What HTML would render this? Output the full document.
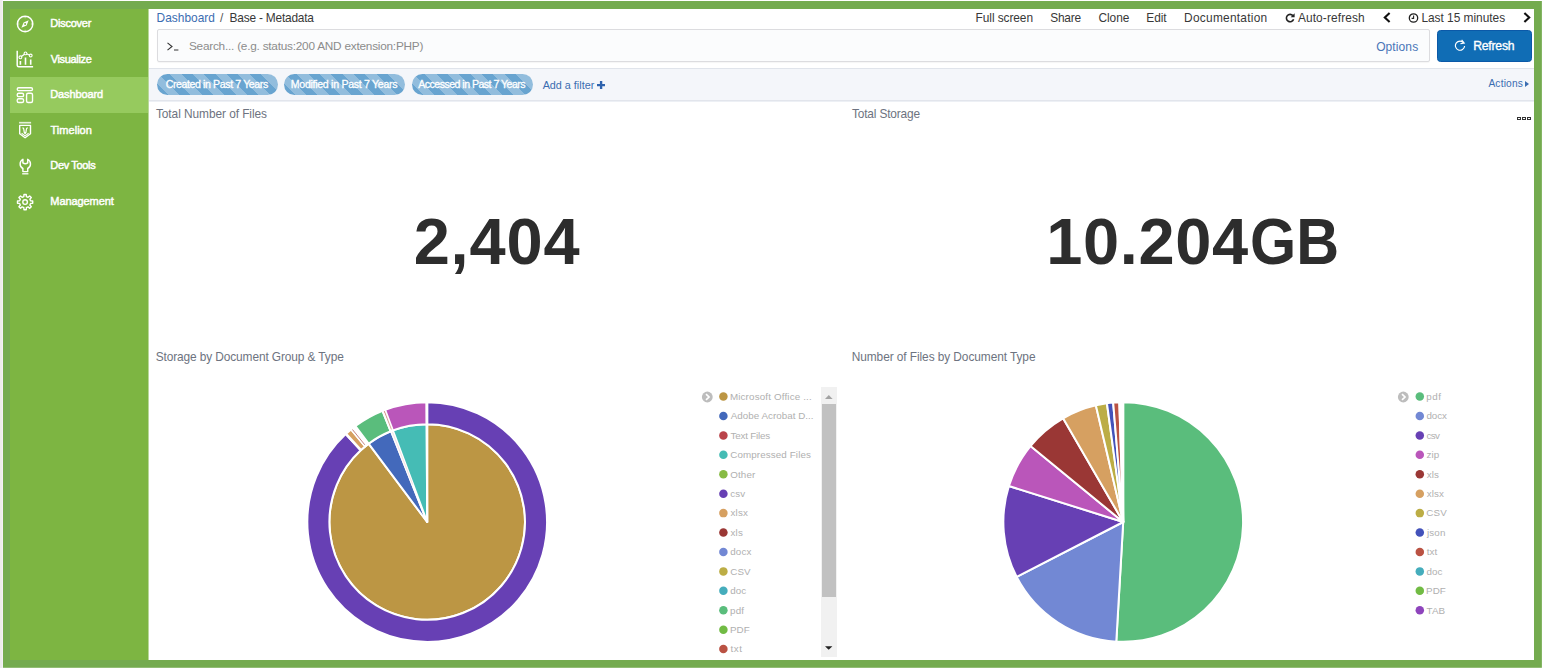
<!DOCTYPE html>
<html lang="en"><head><meta charset="utf-8"><title>Base - Metadata - Kibana</title>
<style>

*{box-sizing:border-box;margin:0;padding:0}
html,body{width:1542px;height:668px;overflow:hidden;background:#fff}
body{font-family:"Liberation Sans",sans-serif;font-size:12px;color:#2d2d2d;position:relative}
#lstrip{position:absolute;left:0;top:0;width:3px;height:668px;background:linear-gradient(90deg,#ececec 0,#ececec 1.8px,#f3f0f6 1.8px)}
#frame{position:absolute;left:3px;top:1px;width:1539px;height:667px;background:#74ab4f}
#side{position:absolute;left:7px;top:8px;width:138px;height:651px;background:#7db542}
#main{position:absolute;left:145px;top:8px;width:1386px;height:651px;background:#fff;overflow:hidden}
.abs{position:absolute;white-space:nowrap}
.pill{position:absolute;top:64.8px;height:21.1px;border-radius:11px;
 background-color:#68a4d0;background-image:repeating-linear-gradient(45deg,rgba(255,255,255,0) 0,rgba(255,255,255,0) 8px,rgba(255,255,255,.28) 8px,rgba(255,255,255,.28) 16px)}

</style></head>
<body>
<div id="lstrip"></div>
<div id="frame">
<div id="side"><div class="abs" style="left:0;top:68px;width:138px;height:36px;background:#96ca5e"></div><svg class="abs" style="left:5.8px;top:5.5px;overflow:visible" width="18" height="18" viewBox="0 0 18 18"><circle cx="9.1" cy="9" r="7.7" fill="none" stroke="#fff" stroke-width="1.5"/><path d="M12.7 5.3 L10.6 10.5 L5.4 12.7 L7.6 7.5 Z" fill="#fff"/><circle cx="9.1" cy="9" r="1" fill="#7db542"/><path d="M9.1 2.2 V3.2 M9.1 14.8 V15.8 M2.3 9 H3.3 M14.9 9 H15.9" stroke="#fff" stroke-width="1" opacity=".8"/></svg><div class="abs" style="left:40.30px;top:7px;font-size:11px;line-height:14px;letter-spacing:-0.243px;color:#fff;-webkit-text-stroke:0.45px #fff;">Discover</div><svg class="abs" style="left:5.8px;top:41.1px;overflow:visible" width="18" height="18" viewBox="0 0 18 18"><path d="M1.2 0.8 V15.2 Q1.2 16.7 2.7 16.7 H17.1" fill="none" stroke="#fff" stroke-width="1.5"/><path d="M4.4 7.3 L9.5 3.4 L14.7 5.5" fill="none" stroke="#fff" stroke-width="1.3"/><circle cx="4.4" cy="7.3" r="1.4" fill="#7db542" stroke="#fff" stroke-width="1.1"/><circle cx="9.5" cy="3.4" r="1.4" fill="#7db542" stroke="#fff" stroke-width="1.1"/><circle cx="14.7" cy="5.5" r="1.4" fill="#7db542" stroke="#fff" stroke-width="1.1"/><path d="M4.4 10.9 V14.8 M9.5 7.4 V14.8 M14.7 9.6 V14.8" stroke="#fff" stroke-width="1.6"/></svg><div class="abs" style="left:40.65px;top:43px;font-size:11px;line-height:14px;letter-spacing:-0.323px;color:#fff;-webkit-text-stroke:0.45px #fff;">Visualize</div><svg class="abs" style="left:5.8px;top:76.7px;overflow:visible" width="18" height="18" viewBox="0 0 18 18"><g fill="none" stroke="#fff" stroke-width="1.35"><rect x="1.22" y="1.78" width="15.3" height="2.85" rx="1.4"/><rect x="1.22" y="7.28" width="6.36" height="3.35" rx="1.5"/><rect x="1.22" y="12.78" width="6.36" height="3.75" rx="1.5"/><rect x="10.58" y="7.28" width="5.95" height="9.25" rx="1.5"/></g></svg><div class="abs" style="left:40.30px;top:78px;font-size:11px;line-height:14px;letter-spacing:-0.125px;color:#fff;-webkit-text-stroke:0.45px #fff;">Dashboard</div><svg class="abs" style="left:5.8px;top:112.3px;overflow:visible" width="18" height="18" viewBox="0 0 18 18"><path d="M3.1 1.7 H15.1" stroke="#fff" stroke-width="1.7" opacity=".8"/><path d="M3.7 4.4 H14.5 V12.8 L9.1 16.8 L3.7 12.8 Z" fill="none" stroke="#fff" stroke-width="1.4" stroke-linejoin="round"/><path d="M6.6 6.6 Q8 7.2 8 9.4 Q8 11.4 9.1 12.5 Q10.2 11.4 10.2 9.4 Q10.2 7.2 11.6 6.6" fill="none" stroke="#fff" stroke-width="1.25"/><path d="M5.6 12.3 L9.1 14.9 L12.6 12.3" fill="none" stroke="#fff" stroke-width="1.1"/></svg><div class="abs" style="left:40.45px;top:114px;font-size:11px;line-height:14px;letter-spacing:0.042px;color:#fff;-webkit-text-stroke:0.45px #fff;">Timelion</div><svg class="abs" style="left:5.8px;top:147.9px;overflow:visible" width="18" height="18" viewBox="0 0 18 18"><path d="M6.9 2.3 A5.2 5.2 0 0 0 6.9 11.5 V14.6 H11.7 V11.5 A5.2 5.2 0 0 0 11.7 2.3 V5.9 Q9.3 7.5 6.9 5.9 Z" fill="none" stroke="#fff" stroke-width="1.45" stroke-linejoin="round"/><path d="M6.2 16.8 H12.4" stroke="#fff" stroke-width="1.3"/></svg><div class="abs" style="left:40.30px;top:149px;font-size:11px;line-height:14px;letter-spacing:-0.340px;color:#fff;-webkit-text-stroke:0.45px #fff;">Dev Tools</div><svg class="abs" style="left:5.8px;top:183.5px;overflow:visible" width="18" height="18" viewBox="0 0 18 18"><g fill="none" stroke="#fff" stroke-width="1.4" stroke-linejoin="round"><path d="M7.79 3.65 L7.96 1.49 L10.24 1.49 L10.41 3.65 L12.03 4.33 L13.67 2.91 L15.29 4.53 L13.87 6.17 L14.55 7.79 L16.71 7.96 L16.71 10.24 L14.55 10.41 L13.87 12.03 L15.29 13.67 L13.67 15.29 L12.03 13.87 L10.41 14.55 L10.24 16.71 L7.96 16.71 L7.79 14.55 L6.17 13.87 L4.53 15.29 L2.91 13.67 L4.33 12.03 L3.65 10.41 L1.49 10.24 L1.49 7.96 L3.65 7.79 L4.33 6.17 L2.91 4.53 L4.53 2.91 L6.17 4.33 Z"/><circle cx="9.1" cy="9.1" r="2.3"/></g></svg><div class="abs" style="left:40.30px;top:185px;font-size:11px;line-height:14px;letter-spacing:-0.080px;color:#fff;-webkit-text-stroke:0.45px #fff;">Management</div></div>
<div id="main">
<div class="abs" style="left:8.62px;top:2px;font-size:11.9px;line-height:15px;letter-spacing:0.016px;color:#3b6db1;">Dashboard</div><div class="abs" style="left:72.00px;top:2px;font-size:11.9px;line-height:15px;letter-spacing:0.000px;color:#555;">/</div><div class="abs" style="left:81.52px;top:2px;font-size:11.9px;line-height:15px;letter-spacing:-0.203px;color:#383838;">Base - Metadata</div><div class="abs" style="left:827.62px;top:2px;font-size:11.9px;line-height:15px;letter-spacing:-0.075px;color:#383838;">Full screen</div><div class="abs" style="left:902.26px;top:2px;font-size:11.9px;line-height:15px;letter-spacing:-0.221px;color:#383838;">Share</div><div class="abs" style="left:950.50px;top:2px;font-size:11.9px;line-height:15px;letter-spacing:-0.065px;color:#383838;">Clone</div><div class="abs" style="left:998.32px;top:2px;font-size:11.9px;line-height:15px;letter-spacing:-0.114px;color:#383838;">Edit</div><div class="abs" style="left:1036.12px;top:2px;font-size:11.9px;line-height:15px;letter-spacing:0.259px;color:#383838;">Documentation</div><div class="abs" style="left:1149.88px;top:2px;font-size:11.9px;line-height:15px;letter-spacing:0.129px;color:#383838;">Auto-refresh</div><div class="abs" style="left:1273.42px;top:2px;font-size:11.9px;line-height:15px;letter-spacing:-0.014px;color:#383838;">Last 15 minutes</div>
<svg class="abs" style="left:1136.5px;top:4.3px" width="10" height="10" viewBox="0 0 10 10"><path d="M7.9 2.6 A3.7 3.7 0 1 0 8.6 6.3" fill="none" stroke="#222" stroke-width="1.6"/><path d="M9.6 0.3 V4.3 H5.6 Z" fill="#222"/></svg>
<svg class="abs" style="left:1234px;top:3.2px" width="10" height="11" viewBox="0 0 10 11"><path d="M7.6 1 L2.8 5.5 L7.6 10" fill="none" stroke="#111" stroke-width="2.1"/></svg>
<svg class="abs" style="left:1259.5px;top:4.3px" width="11" height="10" viewBox="0 0 11 10"><circle cx="5.5" cy="5" r="4.2" fill="none" stroke="#222" stroke-width="1.3"/><path d="M5.6 2.6 V5.4 H3.6" fill="none" stroke="#222" stroke-width="1.1"/></svg>
<svg class="abs" style="left:1373.5px;top:3.2px" width="10" height="11" viewBox="0 0 10 11"><path d="M2.4 1 L7.2 5.5 L2.4 10" fill="none" stroke="#111" stroke-width="2.1"/></svg>

<div class="abs" style="left:8.5px;top:20px;width:1273.3px;height:33px;background:#fbfcfd;border:1px solid #dcdcdf;border-radius:2px;box-shadow:0 1px 1px rgba(0,0,0,.04)"></div>
<svg class="abs" style="left:19px;top:33px" width="12" height="9" viewBox="0 0 12 9"><path d="M0.5 0.8 L5 4.5 L0.5 8.2" fill="none" stroke="#333" stroke-width="1.1"/><path d="M7 8 H11.4" stroke="#333" stroke-width="1"/></svg>
<div class="abs" style="left:1288.8px;top:20.5px;width:95px;height:32px;background:#106db5;border:1px solid #0b59a8;border-radius:3.5px"></div>
<svg class="abs" style="left:1306.3px;top:29.6px" width="12" height="12" viewBox="0 0 12 12"><path d="M9.7 3.9 A4.6 4.6 0 1 0 10.6 7.0" fill="none" stroke="#fff" stroke-width="1.15"/><path d="M7.6 0.9 L10.2 4.1 L6.4 4.7" fill="none" stroke="#fff" stroke-width="1.15"/></svg>
<div class="abs" style="left:0;top:59px;width:1386px;height:33px;background:#f4f6fa;border-top:1px solid #e0e4eb;border-bottom:1px solid #e2e5ec;box-shadow:0 1px 0 #edf0f5"></div>
<div class="pill" style="left:8.7px;width:121.7px"></div>
<div class="pill" style="left:136px;width:121.4px"></div>
<div class="pill" style="left:263.7px;width:121.4px"></div>
<svg class="abs" style="left:1377px;top:72.2px" width="4" height="6" viewBox="0 0 4 6"><path d="M0 0 L4 3 L0 6 Z" fill="#3b6db1"/></svg>
<svg class="abs" style="left:449.3px;top:72.2px" width="8.2" height="8.2" viewBox="0 0 8 8"><path d="M4 0 V8 M0 4 H8" stroke="#2f63ad" stroke-width="2.3"/></svg>
<div class="abs" style="left:40.96px;top:30px;font-size:11.8px;line-height:15px;letter-spacing:-0.230px;color:#8c8c8c;">Search... (e.g. status:200 AND extension:PHP)</div><div class="abs" style="left:1228.13px;top:30px;font-size:12px;line-height:16px;letter-spacing:0.108px;color:#4a76b8;">Options</div><div class="abs" style="left:1325.20px;top:29px;font-size:12.2px;line-height:16px;letter-spacing:-0.221px;color:#fff;-webkit-text-stroke:0.35px #fff;">Refresh</div><div class="abs" style="left:17.66px;top:68px;font-size:10.6px;line-height:14px;letter-spacing:-0.396px;color:#fff;-webkit-text-stroke:0.3px #fff;">Created in Past 7 Years</div><div class="abs" style="left:142.83px;top:68px;font-size:10.6px;line-height:14px;letter-spacing:-0.302px;color:#fff;-webkit-text-stroke:0.3px #fff;">Modified in Past 7 Years</div><div class="abs" style="left:270.28px;top:68px;font-size:10.6px;line-height:14px;letter-spacing:-0.534px;color:#fff;-webkit-text-stroke:0.3px #fff;">Accessed in Past 7 Years</div><div class="abs" style="left:394.68px;top:69px;font-size:10.8px;line-height:14px;letter-spacing:-0.002px;color:#3b6db1;">Add a filter</div><div class="abs" style="left:1340.38px;top:68px;font-size:10.2px;line-height:13px;letter-spacing:0.190px;color:#3b6db1;">Actions</div>
<div class="abs" style="left:0;top:0;width:1px;height:651px;background:#b9d79b"></div>
<div class="abs" style="left:7.93px;top:98px;font-size:11.9px;line-height:15px;letter-spacing:-0.062px;color:#6d7380;">Total Number of Files</div><div class="abs" style="left:703.93px;top:98px;font-size:11.9px;line-height:15px;letter-spacing:-0.154px;color:#6d7380;">Total Storage</div><div class="abs" style="left:7.66px;top:341px;font-size:11.9px;line-height:15px;letter-spacing:-0.107px;color:#6d7380;">Storage by Document Group &amp; Type</div><div class="abs" style="left:703.72px;top:341px;font-size:11.9px;line-height:15px;letter-spacing:-0.076px;color:#6d7380;">Number of Files by Document Type</div><div class="abs" style="left:265.65px;top:191px;font-size:65px;line-height:84px;letter-spacing:0.811px;color:#2d2d2d;font-weight:bold;">2,404</div><div class="abs" style="left:898.21px;top:191px;font-size:65px;line-height:84px;letter-spacing:0.627px;color:#2d2d2d;font-weight:bold;">10.204</div><div class="abs" style="left:1102.07px;top:191px;font-size:65px;line-height:84px;color:#2d2d2d;font-weight:bold;transform-origin:0 0;transform:scaleX(0.9131)">GB</div><div class="abs" style="left:1369.20px;top:107.6px;width:3.9px;height:3.6px;border:1px solid #333;background:#fff"></div><div class="abs" style="left:1373.95px;top:107.6px;width:3.9px;height:3.6px;border:1px solid #333;background:#fff"></div><div class="abs" style="left:1378.70px;top:107.6px;width:3.9px;height:3.6px;border:1px solid #333;background:#fff"></div>
<svg class="abs" style="left:0;top:0" width="1386" height="651" viewBox="0 0 1386 651"><path d="M279.20 513.00 L279.20 415.20 A97.8 97.8 0 1 1 220.62 434.69 Z" fill="#bc9644" stroke="#fff" stroke-width="2" stroke-linejoin="round"/><path d="M279.20 513.00 L220.62 434.69 A97.8 97.8 0 0 1 243.04 422.13 Z" fill="#4369bb" stroke="#fff" stroke-width="2" stroke-linejoin="round"/><path d="M279.20 513.00 L243.04 422.13 A97.8 97.8 0 0 1 244.87 421.42 Z" fill="#ba434a" stroke="#fff" stroke-width="2" stroke-linejoin="round"/><path d="M279.20 513.00 L244.87 421.42 A97.8 97.8 0 0 1 278.69 415.20 Z" fill="#45bcb5" stroke="#fff" stroke-width="2" stroke-linejoin="round"/><path d="M279.20 513.00 L278.69 415.20 A97.8 97.8 0 0 1 279.20 415.20 Z" fill="#87bb44" stroke="#fff" stroke-width="2" stroke-linejoin="round"/><path d="M279.20 393.15 A119.85 119.85 0 1 1 197.69 425.13 L212.69 441.30 A97.8 97.8 0 1 0 279.20 415.20 Z" fill="#6740b4" stroke="#fff" stroke-width="2" stroke-linejoin="round"/><path d="M197.69 425.13 A119.85 119.85 0 0 1 198.15 424.71 L213.06 440.95 A97.8 97.8 0 0 0 212.69 441.30 Z" fill="#ffffff" stroke="#fff" stroke-width="2" stroke-linejoin="round"/><path d="M198.15 424.71 A119.85 119.85 0 0 1 203.05 420.45 L217.06 437.48 A97.8 97.8 0 0 0 213.06 440.95 Z" fill="#d6a061" stroke="#fff" stroke-width="2" stroke-linejoin="round"/><path d="M203.05 420.45 A119.85 119.85 0 0 1 204.76 419.07 L218.45 436.35 A97.8 97.8 0 0 0 217.06 437.48 Z" fill="#9a3735" stroke="#fff" stroke-width="2" stroke-linejoin="round"/><path d="M204.76 419.07 A119.85 119.85 0 0 1 205.91 418.17 L219.39 435.62 A97.8 97.8 0 0 0 218.45 436.35 Z" fill="#7288d4" stroke="#fff" stroke-width="2" stroke-linejoin="round"/><path d="M205.91 418.17 A119.85 119.85 0 0 1 206.74 417.54 L220.07 435.10 A97.8 97.8 0 0 0 219.39 435.62 Z" fill="#bcad45" stroke="#fff" stroke-width="2" stroke-linejoin="round"/><path d="M206.74 417.54 A119.85 119.85 0 0 1 207.41 417.03 L220.62 434.69 A97.8 97.8 0 0 0 220.07 435.10 Z" fill="#45adbc" stroke="#fff" stroke-width="2" stroke-linejoin="round"/><path d="M207.41 417.03 A119.85 119.85 0 0 1 234.50 401.80 L242.72 422.26 A97.8 97.8 0 0 0 220.62 434.69 Z" fill="#5abd7c" stroke="#fff" stroke-width="2" stroke-linejoin="round"/><path d="M234.50 401.80 A119.85 119.85 0 0 1 234.89 401.64 L243.04 422.13 A97.8 97.8 0 0 0 242.72 422.26 Z" fill="#71bb44" stroke="#fff" stroke-width="2" stroke-linejoin="round"/><path d="M234.89 401.64 A119.85 119.85 0 0 1 237.13 400.78 L244.87 421.42 A97.8 97.8 0 0 0 243.04 422.13 Z" fill="#ba5243" stroke="#fff" stroke-width="2" stroke-linejoin="round"/><path d="M237.13 400.78 A119.85 119.85 0 0 1 278.57 393.15 L278.69 415.20 A97.8 97.8 0 0 0 244.87 421.42 Z" fill="#ba56ba" stroke="#fff" stroke-width="2" stroke-linejoin="round"/><path d="M278.57 393.15 A119.85 119.85 0 0 1 279.20 393.15 L279.20 415.20 A97.8 97.8 0 0 0 278.69 415.20 Z" fill="#87bb44" stroke="#fff" stroke-width="2" stroke-linejoin="round"/><path d="M216.78 435.77 L204.49 420.57" stroke="#9e3533" stroke-width="0.8" opacity="0.75"/><path d="M243.40 420.38 L236.36 402.14" stroke="#bf5040" stroke-width="0.8" opacity="0.6"/><path d="M264.78 475.69 L244.49 423.17" stroke="#bf4048" stroke-width="0.8" opacity="0.18"/><path d="M975.20 513.00 L975.20 393.15 A119.85 119.85 0 1 1 968.30 632.65 Z" fill="#5abd7c" stroke="#fff" stroke-width="2" stroke-linejoin="round"/><path d="M975.20 513.00 L968.30 632.65 A119.85 119.85 0 0 1 868.70 567.97 Z" fill="#7288d4" stroke="#fff" stroke-width="2" stroke-linejoin="round"/><path d="M975.20 513.00 L868.70 567.97 A119.85 119.85 0 0 1 860.90 476.96 Z" fill="#6740b4" stroke="#fff" stroke-width="2" stroke-linejoin="round"/><path d="M975.20 513.00 L860.90 476.96 A119.85 119.85 0 0 1 882.46 437.09 Z" fill="#ba56ba" stroke="#fff" stroke-width="2" stroke-linejoin="round"/><path d="M975.20 513.00 L882.46 437.09 A119.85 119.85 0 0 1 915.09 409.31 Z" fill="#9a3735" stroke="#fff" stroke-width="2" stroke-linejoin="round"/><path d="M975.20 513.00 L915.09 409.31 A119.85 119.85 0 0 1 947.83 396.32 Z" fill="#d6a061" stroke="#fff" stroke-width="2" stroke-linejoin="round"/><path d="M975.20 513.00 L947.83 396.32 A119.85 119.85 0 0 1 958.93 394.26 Z" fill="#bcad45" stroke="#fff" stroke-width="2" stroke-linejoin="round"/><path d="M975.20 513.00 L958.93 394.26 A119.85 119.85 0 0 1 965.17 393.57 Z" fill="#4352ba" stroke="#fff" stroke-width="2" stroke-linejoin="round"/><path d="M975.20 513.00 L965.17 393.57 A119.85 119.85 0 0 1 971.33 393.21 Z" fill="#ba5243" stroke="#fff" stroke-width="2" stroke-linejoin="round"/><path d="M975.20 513.00 L971.33 393.21 A119.85 119.85 0 0 1 973.32 393.16 Z" fill="#45adbc" stroke="#fff" stroke-width="2" stroke-linejoin="round"/><path d="M975.20 513.00 L973.32 393.16 A119.85 119.85 0 0 1 974.36 393.15 Z" fill="#71bb44" stroke="#fff" stroke-width="2" stroke-linejoin="round"/><path d="M975.20 513.00 L974.36 393.15 A119.85 119.85 0 0 1 975.20 393.15 Z" fill="#8e44bc" stroke="#fff" stroke-width="2" stroke-linejoin="round"/><circle cx="559.30" cy="388.00" r="5.4" fill="#bdbdbd"/><path d="M558.00 385.20 L561.00 388.00 L558.00 390.80" fill="none" stroke="#fff" stroke-width="1.7"/><circle cx="575.40" cy="387.60" r="4.25" fill="#bc9644"/><circle cx="575.40" cy="407.02" r="4.25" fill="#4369bb"/><circle cx="575.40" cy="426.44" r="4.25" fill="#ba434a"/><circle cx="575.40" cy="445.86" r="4.25" fill="#45bcb5"/><circle cx="575.40" cy="465.28" r="4.25" fill="#87bb44"/><circle cx="575.40" cy="484.70" r="4.25" fill="#6740b4"/><circle cx="575.40" cy="504.12" r="4.25" fill="#d6a061"/><circle cx="575.40" cy="523.54" r="4.25" fill="#9a3735"/><circle cx="575.40" cy="542.96" r="4.25" fill="#7288d4"/><circle cx="575.40" cy="562.38" r="4.25" fill="#bcad45"/><circle cx="575.40" cy="581.80" r="4.25" fill="#45adbc"/><circle cx="575.40" cy="601.22" r="4.25" fill="#5abd7c"/><circle cx="575.40" cy="620.64" r="4.25" fill="#71bb44"/><circle cx="575.40" cy="640.06" r="4.25" fill="#ba5243"/><circle cx="1255.30" cy="388.00" r="5.4" fill="#bdbdbd"/><path d="M1254.00 385.20 L1257.00 388.00 L1254.00 390.80" fill="none" stroke="#fff" stroke-width="1.7"/><circle cx="1271.80" cy="387.60" r="4.25" fill="#5abd7c"/><circle cx="1271.80" cy="407.02" r="4.25" fill="#7288d4"/><circle cx="1271.80" cy="426.44" r="4.25" fill="#6740b4"/><circle cx="1271.80" cy="445.86" r="4.25" fill="#ba56ba"/><circle cx="1271.80" cy="465.28" r="4.25" fill="#9a3735"/><circle cx="1271.80" cy="484.70" r="4.25" fill="#d6a061"/><circle cx="1271.80" cy="504.12" r="4.25" fill="#bcad45"/><circle cx="1271.80" cy="523.54" r="4.25" fill="#4352ba"/><circle cx="1271.80" cy="542.96" r="4.25" fill="#ba5243"/><circle cx="1271.80" cy="562.38" r="4.25" fill="#45adbc"/><circle cx="1271.80" cy="581.80" r="4.25" fill="#71bb44"/><circle cx="1271.80" cy="601.22" r="4.25" fill="#8e44bc"/></svg>
<div class="abs" style="left:581.90px;top:381px;font-size:9.8px;line-height:13px;letter-spacing:0.160px;color:#b0b0b0;">Microsoft Office ...</div><div class="abs" style="left:582.68px;top:400px;font-size:9.8px;line-height:13px;letter-spacing:0.036px;color:#b0b0b0;">Adobe Acrobat D...</div><div class="abs" style="left:582.48px;top:420px;font-size:9.8px;line-height:13px;letter-spacing:-0.189px;color:#b0b0b0;">Text Files</div><div class="abs" style="left:582.20px;top:439px;font-size:9.8px;line-height:13px;letter-spacing:0.120px;color:#b0b0b0;">Compressed Files</div><div class="abs" style="left:582.24px;top:459px;font-size:9.8px;line-height:13px;letter-spacing:0.120px;color:#b0b0b0;">Other</div><div class="abs" style="left:582.28px;top:478px;font-size:9.8px;line-height:13px;letter-spacing:0.120px;color:#b0b0b0;">csv</div><div class="abs" style="left:582.59px;top:497px;font-size:9.8px;line-height:13px;letter-spacing:0.120px;color:#b0b0b0;">xlsx</div><div class="abs" style="left:582.59px;top:517px;font-size:9.8px;line-height:13px;letter-spacing:0.120px;color:#b0b0b0;">xls</div><div class="abs" style="left:582.29px;top:536px;font-size:9.8px;line-height:13px;letter-spacing:0.120px;color:#b0b0b0;">docx</div><div class="abs" style="left:582.20px;top:556px;font-size:9.8px;line-height:13px;letter-spacing:0.120px;color:#b0b0b0;">CSV</div><div class="abs" style="left:582.29px;top:575px;font-size:9.8px;line-height:13px;letter-spacing:0.085px;color:#b0b0b0;">doc</div><div class="abs" style="left:582.07px;top:595px;font-size:9.8px;line-height:13px;letter-spacing:0.120px;color:#b0b0b0;">pdf</div><div class="abs" style="left:581.90px;top:614px;font-size:9.8px;line-height:13px;letter-spacing:0.120px;color:#b0b0b0;">PDF</div><div class="abs" style="left:582.55px;top:633px;font-size:9.8px;line-height:13px;letter-spacing:0.487px;color:#b0b0b0;">txt</div>
<div class="abs" style="left:1278.17px;top:381px;font-size:9.8px;line-height:13px;letter-spacing:0.647px;color:#b0b0b0;">pdf</div><div class="abs" style="left:1278.39px;top:400px;font-size:9.8px;line-height:13px;letter-spacing:-0.028px;color:#b0b0b0;">docx</div><div class="abs" style="left:1278.38px;top:420px;font-size:9.8px;line-height:13px;letter-spacing:-0.625px;color:#b0b0b0;">csv</div><div class="abs" style="left:1278.40px;top:439px;font-size:9.8px;line-height:13px;letter-spacing:0.120px;color:#b0b0b0;">zip</div><div class="abs" style="left:1278.69px;top:459px;font-size:9.8px;line-height:13px;letter-spacing:0.120px;color:#b0b0b0;">xls</div><div class="abs" style="left:1278.69px;top:478px;font-size:9.8px;line-height:13px;letter-spacing:0.120px;color:#b0b0b0;">xlsx</div><div class="abs" style="left:1278.30px;top:497px;font-size:9.8px;line-height:13px;letter-spacing:0.120px;color:#b0b0b0;">CSV</div><div class="abs" style="left:1279.04px;top:517px;font-size:9.8px;line-height:13px;letter-spacing:0.120px;color:#b0b0b0;">json</div><div class="abs" style="left:1278.65px;top:536px;font-size:9.8px;line-height:13px;letter-spacing:0.120px;color:#b0b0b0;">txt</div><div class="abs" style="left:1278.39px;top:556px;font-size:9.8px;line-height:13px;letter-spacing:0.120px;color:#b0b0b0;">doc</div><div class="abs" style="left:1278.00px;top:575px;font-size:9.8px;line-height:13px;letter-spacing:0.120px;color:#b0b0b0;">PDF</div><div class="abs" style="left:1278.58px;top:595px;font-size:9.8px;line-height:13px;letter-spacing:0.120px;color:#b0b0b0;">TAB</div>
<div class="abs" style="left:673.1px;top:378.2px;width:16.1px;height:269.8px;background:#f1f1f1"></div>
<div class="abs" style="left:674.4px;top:395.0px;width:13.5px;height:193.2px;background:#c1c1c1"></div>
<svg class="abs" style="left:677.4px;top:385.6px" width="7.6" height="4" viewBox="0 0 8 4"><path d="M0 4 L4 0 L8 4 Z" fill="#a3a3a3"/></svg>
<svg class="abs" style="left:677.4px;top:637.0px" width="7.4" height="4" viewBox="0 0 8 4"><path d="M0 0 L4 4 L8 0 Z" fill="#222"/></svg>

</div>
<div class="abs" style="left:0;top:666px;width:1539px;height:1px;background:rgba(255,255,255,.22)"></div>
<div class="abs" style="left:1538px;top:0;width:1px;height:667px;background:rgba(255,255,255,.12)"></div>
</div>
</body></html>
